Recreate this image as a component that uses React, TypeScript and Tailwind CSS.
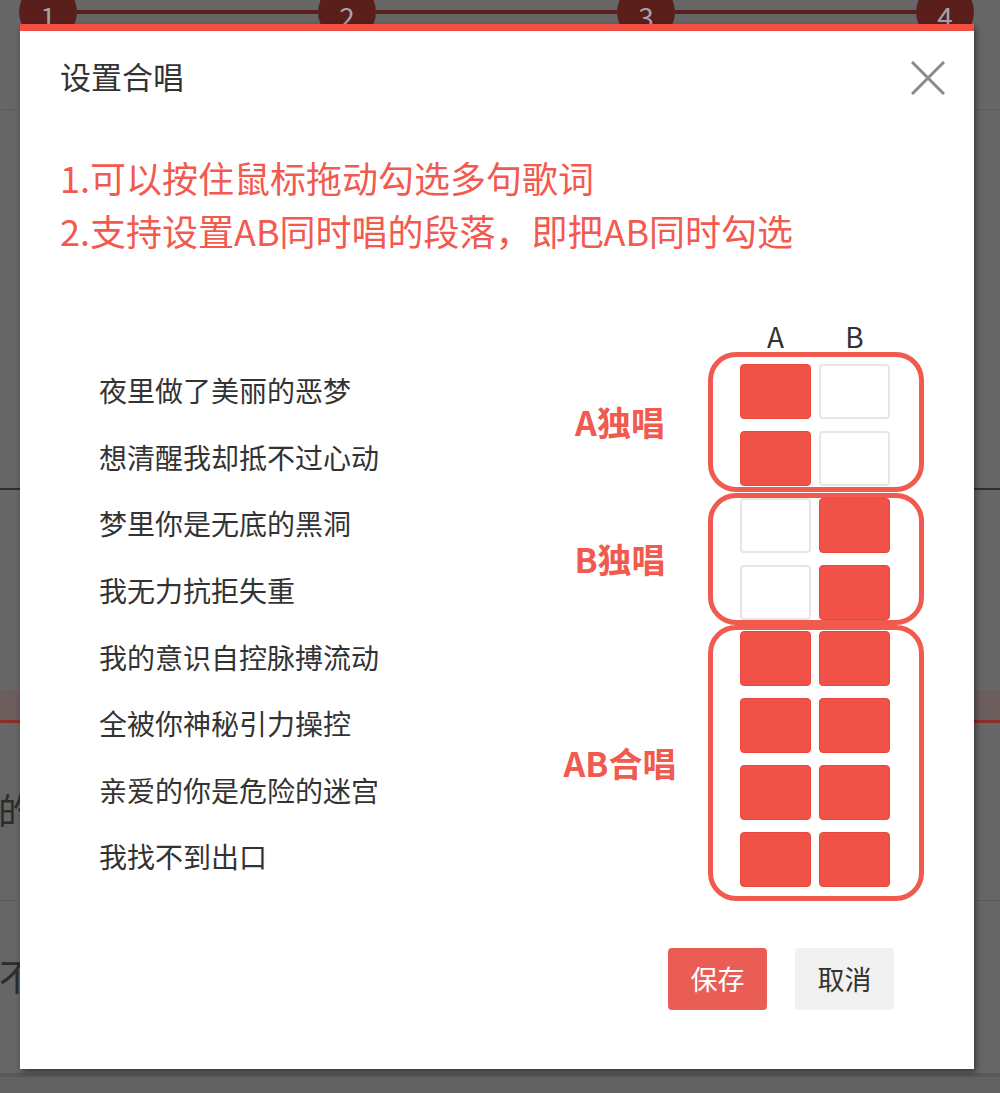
import React from "react";

const font = { fontFamily: '"Noto Sans CJK SC", "Noto Sans", sans-serif' };

const lyrics = [
  "夜里做了美丽的恶梦",
  "想清醒我却抵不过心动",
  "梦里你是无底的黑洞",
  "我无力抗拒失重",
  "我的意识自控脉搏流动",
  "全被你神秘引力操控",
  "亲爱的你是危险的迷宫",
  "我找不到出口",
];

type Group = { label: string; rows: boolean[][]; pad: string };

const groups: Group[] = [
  { label: "A独唱", rows: [[true, false], [true, false]], pad: "pt-[7px] pb-[1px]" },
  { label: "B独唱", rows: [[false, true], [false, true]], pad: "mt-[1px] pt-0 pb-0" },
  {
    label: "AB合唱",
    rows: [[true, true], [true, true], [true, true], [true, true]],
    pad: "pt-[1px] pb-[9px]",
  },
];

const Cell = ({ on }: { on: boolean }) =>
  on ? (
    <div className="w-[71px] h-[55px] rounded-[4px] bg-[#f05247] border border-[#e9473c]"></div>
  ) : (
    <div className="w-[71px] h-[55px] rounded-[4px] bg-white border-2 border-[#e9e5e5]"></div>
  );

const Backdrop = () => (
  <div className="w-full h-[1093px] bg-[#666666] overflow-hidden flex flex-col" style={font}>
    {/* step bar */}
    <div className="h-[110px] border-b border-[#5d5d5d]">
      <div className="flex items-center pl-[19px] pr-[26px] -mt-[17px] h-[58px]">
        {[1, 2, 3, 4].map((n, i) => (
          <React.Fragment key={n}>
            {i > 0 && <div className="flex-1 h-[4px] bg-[#5a1f1b]"></div>}
            <div className="w-[58px] h-[58px] rounded-full bg-[#5a1f1b] flex items-center justify-center text-[28px] leading-none text-[#a3a3ad] pt-[8px]">
              {n}
            </div>
          </React.Fragment>
        ))}
      </div>
    </div>
    <div className="h-[380px] border-b-2 border-[#2f2f2f]"></div>
    <div className="h-[200px]"></div>
    <div className="h-[33px] bg-[#6b5e5d] border-b-[3px] border-[#8a2f29]"></div>
    <div className="h-[178px] border-b border-[#5c5c5c]">
      <div className="mt-[68px] -ml-[2px] text-[36px] leading-none text-[#2d2d2d]">的</div>
    </div>
    <div className="h-[172px]">
      <div className="mt-[56px] -ml-[1px] text-[36px] leading-none text-[#2d2d2d]">不</div>
    </div>
    <div className="flex-1 border-t-[4px] border-[#585858] bg-[#626262]"></div>
  </div>
);

export default function App() {
  return (
    <div className="relative w-[1000px] h-[1093px] overflow-hidden">
      <Backdrop />

      {/* dialog */}
      <div
        className="absolute left-[20px] top-[24px] w-[954px] bg-white border-t-[7px] border-[#f24e42] shadow-[2px_3px_6px_rgba(0,0,0,0.45)]"
        style={font}
      >
        <div className="flex items-center justify-between pt-[25px] pl-[40px] pr-[29px]">
          <div className="text-[31px] leading-[40px] text-[#333333]">设置合唱</div>
          <svg width="34" height="34" viewBox="0 0 34 34" className="mt-[4px]">
            <path d="M1 1 L33 33 M33 1 L1 33" stroke="#8a8a8a" strokeWidth="3" fill="none" />
          </svg>
        </div>

        <div className="mt-[55px] pl-[40px] text-[36px] leading-[53px] text-[#f25a50]">
          <p>1.可以按住鼠标拖动勾选多句歌词</p>
          <p>2.支持设置AB同时唱的段落，即把AB同时勾选</p>
        </div>

        <div className="mt-[63px] flex justify-between pl-[79px] pr-[50px]">
          {/* lyric list */}
          <div className="pt-[37px] flex flex-col">
            {lyrics.map((l) => (
              <div key={l} className="h-[66.6px] flex items-center text-[28px] text-[#333333]">
                {l}
              </div>
            ))}
          </div>

          {/* part picker */}
          <div className="flex flex-col">
            <div className="flex gap-[8px] pl-[192px] h-[32px] text-[28px] leading-[32px] text-[#333333]">
              <span className="w-[71px] text-center">A</span>
              <span className="w-[71px] text-center">B</span>
            </div>
            {groups.map((g) => (
              <div key={g.label} className={`flex items-center ${g.pad.includes("mt-") ? "mt-[1px]" : ""}`}>
                <div className="w-[144px] mr-[16px] text-center text-[34px] font-bold leading-none text-[#f05a4f]">
                  {g.label}
                </div>
                <div
                  className={`w-[216px] border-[5px] border-[#f05a4f] rounded-[28px] pl-[27px] pr-[29px] flex flex-col gap-[12px] ${g.pad.replace("mt-[1px] ", "")}`}
                >
                  {g.rows.map((r, i) => (
                    <div key={i} className="flex gap-[8px]">
                      <Cell on={r[0]} />
                      <Cell on={r[1]} />
                    </div>
                  ))}
                </div>
              </div>
            ))}
          </div>
        </div>

        <div className="mt-[47px] pb-[59px] pr-[80px] flex justify-end gap-[28px]">
          <button className="w-[99px] h-[62px] rounded-[4px] bg-[#ea5d54] text-white text-[27px]">
            保存
          </button>
          <button className="w-[99px] h-[62px] rounded-[4px] bg-[#f1f1f1] text-[#333333] text-[27px]">
            取消
          </button>
        </div>
      </div>
    </div>
  );
}
